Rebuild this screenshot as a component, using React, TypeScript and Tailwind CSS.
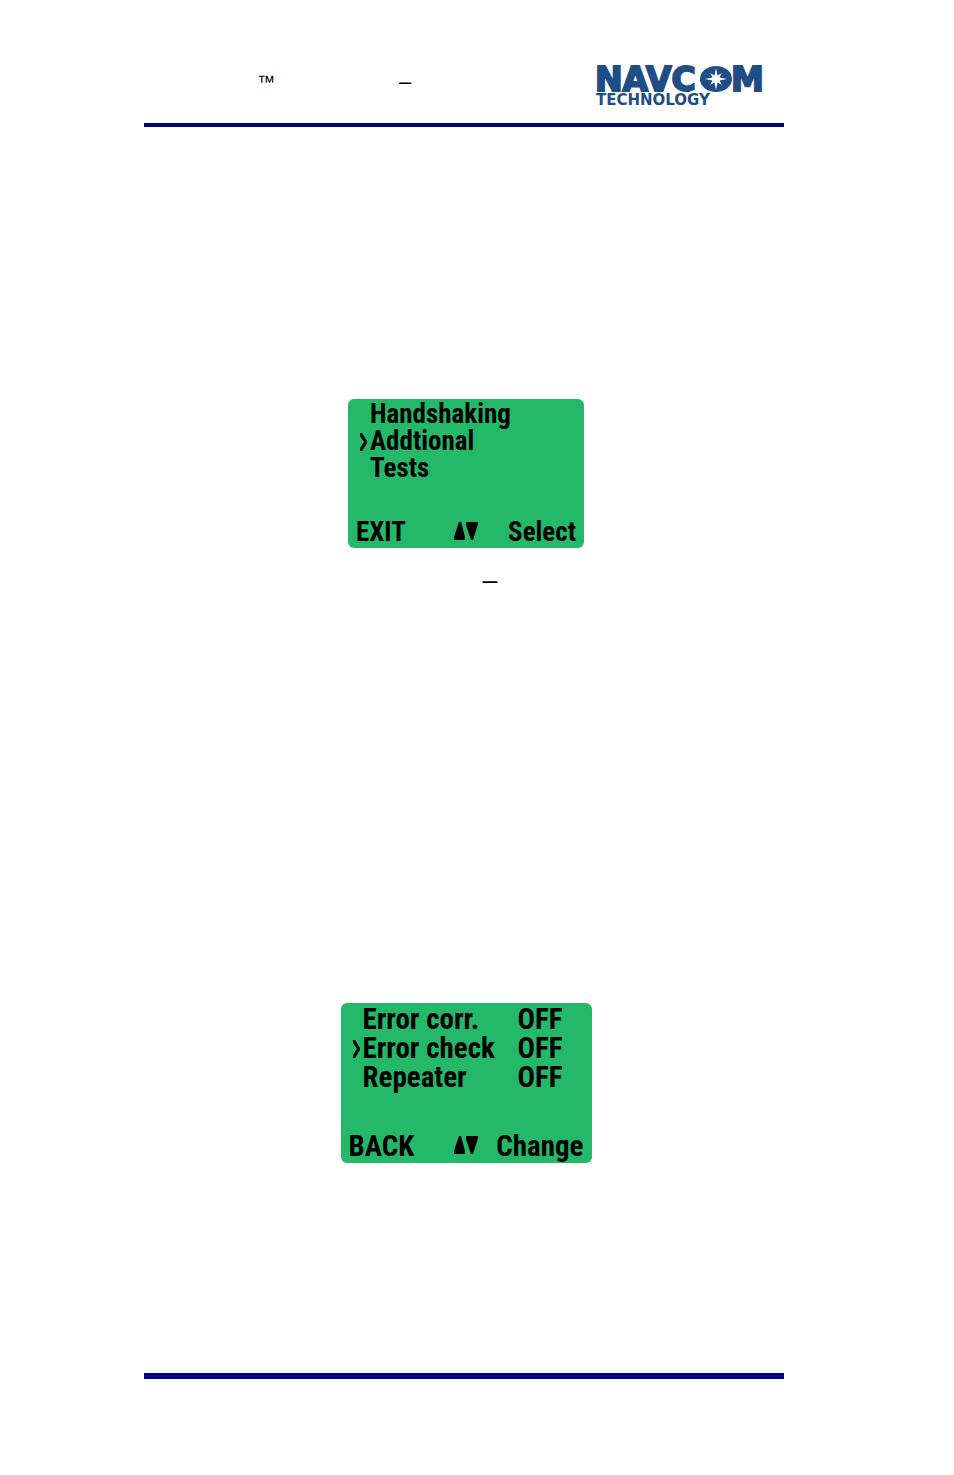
import React from 'react';
import { clsx } from 'clsx';

type LcdScreenProps = {
  leftLabel: string;
  rightLabel: string;
  className?: string;
  children: React.ReactNode;
};

const settings = [
  { name: 'Error corr.', value: 'OFF', selected: false },
  { name: 'Error check', value: 'OFF', selected: true },
  { name: 'Repeater', value: 'OFF', selected: false },
];

// Marker in front of the selected line
const Cursor = () => (
  <svg viewBox="0 0 12 20" className="w-3 h-5 shrink-0" aria-hidden="true">
    <path d="M2 1V4L6 10L2 16V19H4L9 11V9L4 1Z" />
  </svg>
);

const ScrollArrows = () => (
  <svg viewBox="0 0 24 20" className="w-6 h-5 mb-1" aria-hidden="true">
    <path d="M0 19V16L5 1H7L11 16V19Z" />
    <path d="M12 1H24V3L19 19H17L12 4Z" />
  </svg>
);

const NavcomLogo = () => (
  <svg viewBox="0 0 184 36" className="w-[184px] h-9 overflow-visible" role="img" aria-label="NavCom Technology">
    <g fill="#1f4e86" stroke="#1f4e86" fontFamily="DejaVu Sans" fontWeight="700">
      <text x="-1" y="23" fontSize="33" strokeWidth="2">NAVC</text>
      <ellipse cx="120" cy="11" rx="16" ry="13" stroke="none" />
      <text x="135" y="23" fontSize="33" strokeWidth="2">M</text>
      <text x="0" y="37" fontSize="15" strokeWidth="0">TECHNOLOGY</text>
    </g>
    <path
      d="M120 0L121.5 7.5L126 5L123.5 9.5L131 11L123.5 12.5L126 17L121.5 14.5L120 22L118.5 14.5L114 17L116.5 12.5L109 11L116.5 9.5L114 5L118.5 7.5Z"
      fill="#fff"
    />
  </svg>
);

const LcdScreen: React.FC<LcdScreenProps> = ({ leftLabel, rightLabel, className, children }) => (
  <section
    className={clsx(
      "flex flex-col justify-between rounded-md bg-[#24b968] font-['Roboto_Condensed','Roboto',sans-serif] font-bold text-black",
      className
    )}
  >
    {children}
    <div className="grid grid-cols-[1fr_auto_1fr] items-center px-2">
      <button type="button" className="justify-self-start">{leftLabel}</button>
      <button type="button" aria-label="Scroll"><ScrollArrows /></button>
      <button type="button" className="justify-self-end">{rightLabel}</button>
    </div>
  </section>
);

const App = () => {
  return (
    <div className="bg-white pl-36 pr-[170px] pt-16 pb-24 font-['Liberation_Sans',sans-serif] text-black">
      <header className="flex items-start justify-between border-b-4 border-[#000080] pb-[19px] pr-1">
        <div className="flex pl-[113px] pt-1">
          <span className="w-[142px] text-lg leading-7">™</span>
          <span className="text-[22px] leading-7">–</span>
        </div>
        <div className="pt-1"><NavcomLogo /></div>
      </header>

      <main className="flex flex-col items-center pl-1 pt-[272px] pb-[210px]">
        <figure className="flex flex-col items-center">
          <LcdScreen leftLabel="EXIT" rightLabel="Select" className="w-[236px] h-[149px] text-[27px] leading-[27px] pt-[2px] pb-[2px]">
            <ul className="pl-[10px]">
              <li className="pl-3">Handshaking</li>
              <li className="flex items-center"><Cursor />Addtional</li>
              <li className="pl-3">Tests</li>
            </ul>
          </LcdScreen>
          <figcaption className="pl-12 pt-[18px] text-[27px] leading-7">–</figcaption>
        </figure>

        <figure className="pt-[409px]">
          <LcdScreen leftLabel="BACK" rightLabel="Change" className="w-[251px] h-40 text-[29px] leading-[29px] pt-[2px] pb-[2px]">
            <table className="ml-[10px] w-[212px]">
              <tbody>
                {settings.map((item) => (
                  <tr key={item.name}>
                    <td className="w-3 p-0">{item.selected && <Cursor />}</td>
                    <td className="p-0 whitespace-nowrap">{item.name}</td>
                    <td className="p-0 text-right">{item.value}</td>
                  </tr>
                ))}
              </tbody>
            </table>
          </LcdScreen>
        </figure>
      </main>

      <footer className="border-t-[6px] border-[#000080]" />
    </div>
  );
};

export default App;
